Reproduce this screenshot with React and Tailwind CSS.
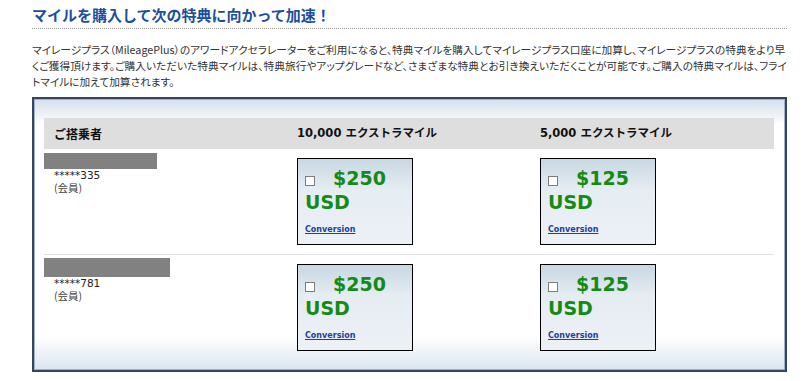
import React from "react";

const jp = "font-['Noto_Sans_CJK_JP',sans-serif]";
const verdana = "font-['DejaVu_Sans','Noto_Sans_CJK_JP',sans-serif]";

const passengers = [
  { id: 1, bar: "w-[113px] h-[16px]", pt: "pt-[4px]", number: "*****335" },
  { id: 2, bar: "w-[126px] h-[19px]", pt: "pt-[3px]", number: "*****781" },
];

// one price card (checkbox + amount + conversion link)
const PriceCard = ({ amount }) => (
  <div className="w-[116px] h-[87px] border border-black bg-[linear-gradient(to_bottom,#c8d7e2_0%,#e5ecf2_35%,#ecf1f6_100%)] pl-[7px] pt-[7px]">
    <div className={`${verdana} font-bold text-[19px] leading-[24px] text-[#158a15]`}>
      <span className="inline-block w-[10px] h-[10px] border border-[#7d7d7d] bg-white mr-[18px] align-[-1px]" />
      {amount}
      <br />
      USD
    </div>
    <a href="#" className={`${verdana} block mt-[10px] text-[8px] leading-[12px] font-bold text-[#21409a] underline`}>
      Conversion
    </a>
  </div>
);

const App = () => {
  return (
    <div className={`${jp} min-h-screen bg-white px-[32px] pt-[5px]`}>
      <h1 className="w-[755px] text-[15px] leading-[20px] font-bold text-[#1c4f9c] pb-[3px] border-b border-dotted border-[#9a9a9a]">
        マイルを購入して次の特典に向かって加速！
      </h1>

      <p className="w-[755px] mt-[13px] text-[10.7px] leading-[16px] text-[#333] whitespace-nowrap [font-feature-settings:'palt']">
        マイレージプラス（MileagePlus）のアワードアクセラレーターをご利用になると、特典マイルを購入してマイレージプラス口座に加算し、マイレージプラスの特典をより早
        <br />
        くご獲得頂けます。ご購入いただいた特典マイルは、特典旅行やアップグレードなど、さまざまな特典とお引き換えいただくことが可能です。ご購入の特典マイルは、フライ
        <br />
        トマイルに加えて加算されます。
      </p>

      {/* purchase table */}
      <div className="w-[755px] mt-[7px] border-2 border-[#33465d] shadow-[inset_0_0_0_1px_#9db2ca] bg-[linear-gradient(to_bottom,#d3dfeb_0px,#ffffff_26px,#ffffff_calc(100%-34px),#dce5ee_100%)] pt-[19px] pl-[10px] pr-[11px] pb-[19px]">
        <div className="grid grid-cols-[253px_243px_1fr] h-[31px] items-center bg-[#dedede] text-[12px] font-bold text-[#111]">
          <div className="pl-[10px]">ご搭乗者</div>
          <div className={verdana + " text-[11.5px]"}>10,000 エクストラマイル</div>
          <div className={verdana + " text-[11.5px]"}>5,000 エクストラマイル</div>
        </div>

        {passengers.map((p, i) => (
          <div
            key={p.id}
            className={`grid grid-cols-[253px_243px_1fr] ${i === 0 ? "border-b border-[#e2e2e2] pb-[9px]" : ""}`}
          >
            <div className={p.pt}>
              <div className={`${p.bar} bg-[#818181]`} />
              <div className="pl-[10px] text-[10.5px] leading-[12.5px] text-[#222]">
                <div className={verdana}>{p.number}</div>
                <div className="text-[#444]">(会員)</div>
              </div>
            </div>
            <div className="pt-[9px]">
              <PriceCard amount="$250" />
            </div>
            <div className="pt-[9px]">
              <PriceCard amount="$125" />
            </div>
          </div>
        ))}
      </div>
    </div>
  );
};

export default App;
